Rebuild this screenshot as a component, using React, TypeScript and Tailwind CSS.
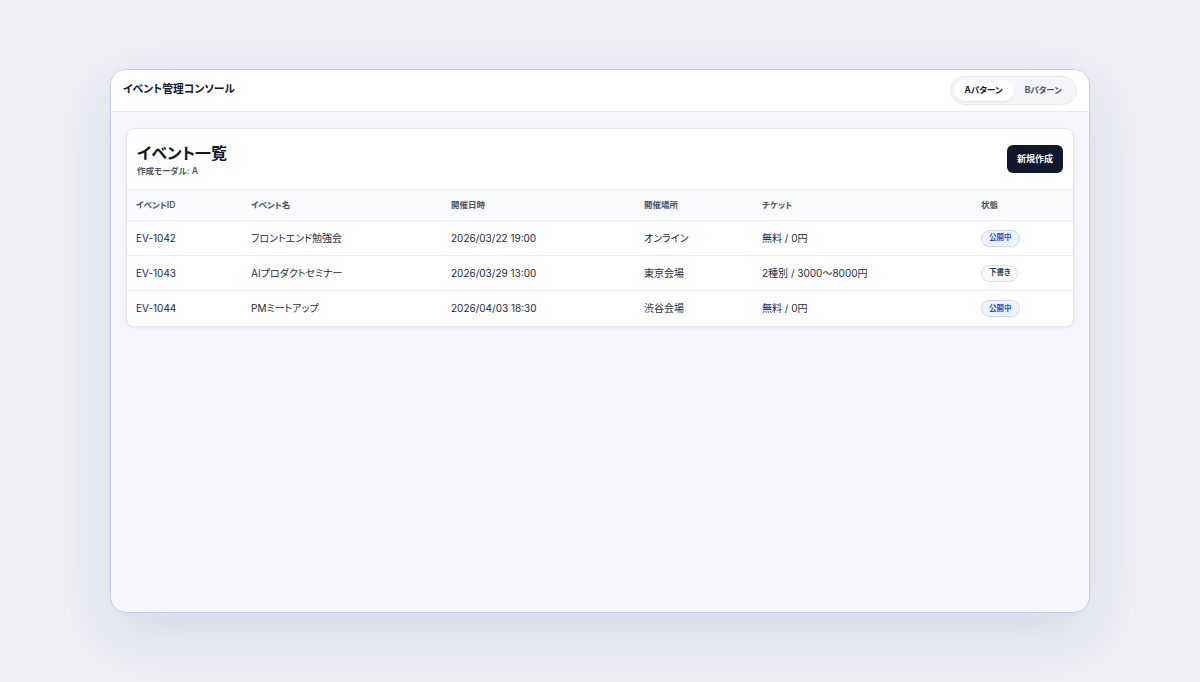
import React from "react";

const rows = [
  { id: "EV-1042", name: "フロントエンド勉強会", date: "2026/03/22 19:00", place: "オンライン", ticket: "無料 / 0円", status: "公開中" },
  { id: "EV-1043", name: "AIプロダクトセミナー", date: "2026/03/29 13:00", place: "東京会場", ticket: "2種別 / 3000〜8000円", status: "下書き" },
  { id: "EV-1044", name: "PMミートアップ", date: "2026/04/03 18:30", place: "渋谷会場", ticket: "無料 / 0円", status: "公開中" },
];

export default function App() {
  return (
    <div
      className="w-full h-[682px] bg-[#eef0f5] flex items-center justify-center text-[#0f172a] [font-feature-settings:'palt']"
      style={{ fontFamily: 'Inter, "Noto Sans CJK JP", sans-serif' }}
    >
      <div className="w-[980px] h-[544px] rounded-2xl border border-[#c9cbee] bg-[#f5f7fc] overflow-hidden shadow-[0_20px_60px_rgba(100,110,170,0.18)] flex flex-col">
        <header className="h-[42px] shrink-0 bg-white border-b border-[#e6e9f0] flex items-center justify-between pl-[12px] pr-[12px]">
          <div className="text-[10.8px] font-bold">イベント管理コンソール</div>
          <div className="flex items-center rounded-full border border-[#e5e7eb] bg-[#f5f6f9] p-[3px] h-[29px]">
            <div className="h-full px-[11px] flex items-center rounded-full bg-white shadow-[0_1px_2px_rgba(0,0,0,0.08)] text-[8.5px] font-bold text-[#0f172a]">Aパターン</div>
            <div className="h-full px-[11px] flex items-center rounded-full text-[8.5px] font-bold text-[#475569]">Bパターン</div>
          </div>
        </header>
        <main className="flex-1 px-[15px] pt-[16px]">
          <section className="bg-white rounded-lg border border-[#e3e6ee] shadow-[0_1px_3px_rgba(15,23,42,0.06)] overflow-hidden">
            <div className="flex items-center justify-between px-[10px] h-[60px]">
              <div className="pt-[2px]">
                <h1 className="text-[16px] font-bold leading-[20px]">イベント一覧</h1>
                <p className="text-[8.5px] font-semibold text-[#475569] mt-[2px]">作成モーダル: A</p>
              </div>
              <button className="h-[28px] px-[10px] rounded-md bg-[#0f172a] text-white text-[9px] font-bold">新規作成</button>
            </div>
            <table className="w-full border-collapse text-left">
              <colgroup>
                <col className="w-[115px]" />
                <col className="w-[200px]" />
                <col className="w-[193px]" />
                <col className="w-[118px]" />
                <col className="w-[219px]" />
                <col />
              </colgroup>
              <thead>
                <tr className="h-[31px] bg-[#f8fafc] border-t border-b border-[#e6e9f0]">
                  {["イベントID", "イベント名", "開催日時", "開催場所", "チケット", "状態"].map((h) => (
                    <th key={h} className="px-[9px] text-[8.5px] font-semibold text-[#475569]">{h}</th>
                  ))}
                </tr>
              </thead>
              <tbody>
                {rows.map((r, i) => (
                  <tr key={r.id} className={`h-[35px] text-[10px] text-[#1e293b] ${i < rows.length - 1 ? "border-b border-[#eceef3]" : ""}`}>
                    <td className="px-[9px]">{r.id}</td>
                    <td className="px-[9px]">{r.name}</td>
                    <td className="px-[9px]">{r.date}</td>
                    <td className="px-[9px]">{r.place}</td>
                    <td className="px-[9px]">{r.ticket}</td>
                    <td className="px-[9px]">
                      {r.status === "公開中" ? (
                        <span className="inline-flex items-center h-[17px] px-[7px] rounded-full border border-[#c7d7fb] bg-[#eef4ff] text-[7.5px] font-bold text-[#1d4ed8]">{r.status}</span>
                      ) : (
                        <span className="inline-flex items-center h-[17px] px-[7px] rounded-full border border-[#d8dce4] bg-[#f8fafc] text-[7.5px] font-bold text-[#334155]">{r.status}</span>
                      )}
                    </td>
                  </tr>
                ))}
              </tbody>
            </table>
          </section>
        </main>
      </div>
    </div>
  );
}
